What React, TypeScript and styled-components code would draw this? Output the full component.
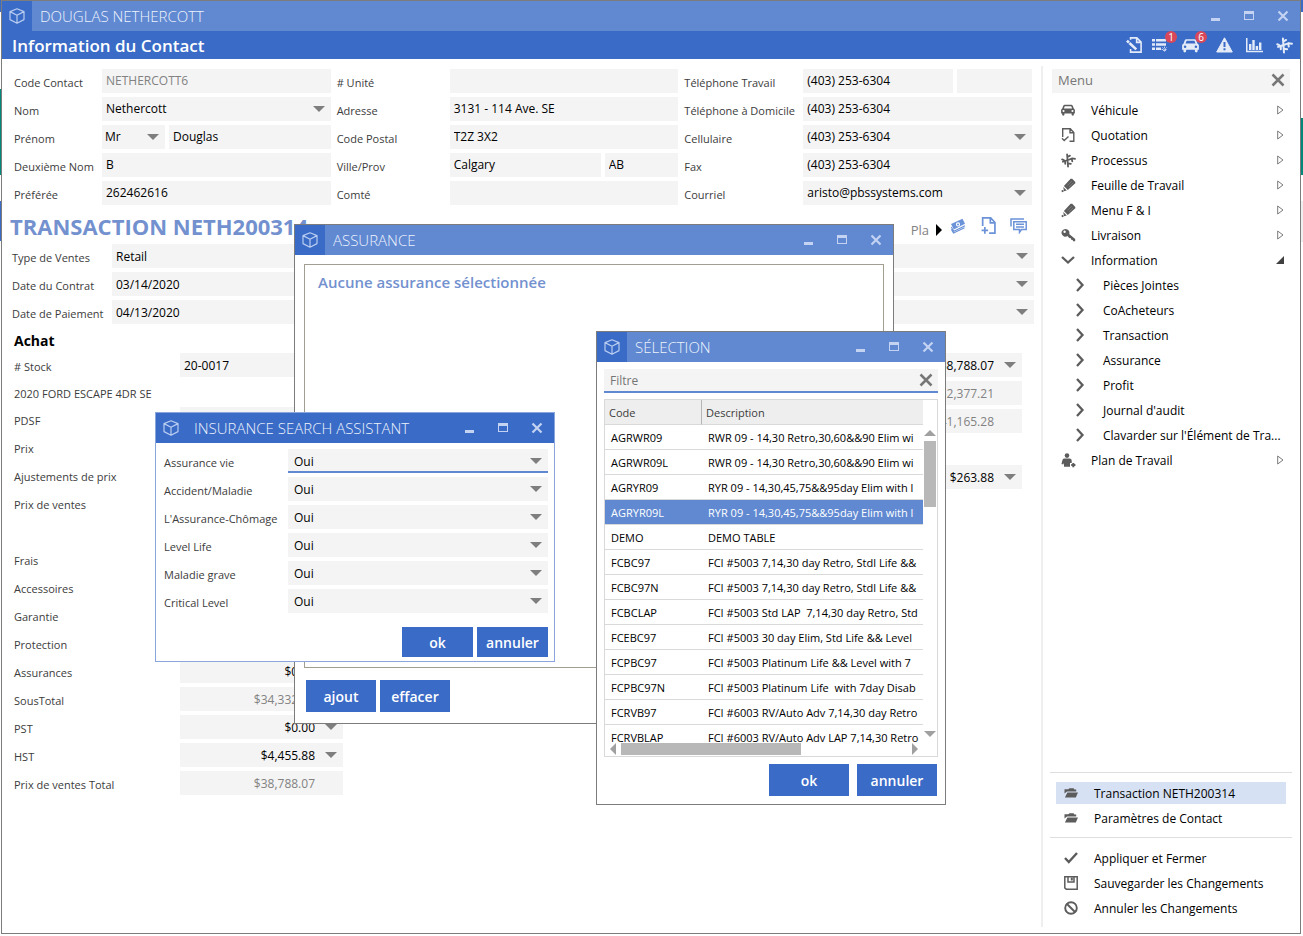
import React, { useId } from "react";
import styled, { createGlobalStyle, css } from "styled-components";

const color = {
  deep: "#3a6bc7",
  light: "#6089d2",
  soft: "#7391cf",
  field: "#f4f4f4",
  frame: "#7c7c7c",
  label: "#3c3c3c",
  muted: "#828282",
  icon: "#5c5c5c",
};

const Global = createGlobalStyle`
  *, *::before, *::after { box-sizing: border-box; }
  body { margin: 0; background: #fff; font-family: "Open Sans", "Noto Sans", sans-serif; font-size: 12px; color: #000; }
  button, input, select { font: inherit; color: inherit; margin: 0; }
  button { cursor: pointer; }
  ul { list-style: none; margin: 0; padding: 0; }
  h1, h2, h3, p { margin: 0; }
`;

const Desktop = styled.div`
  min-height: 100vh;
  position: relative;
  display: flex;
  padding: 0 2px 2px 1px;
  background-image:
    linear-gradient(#3a6bc7 0 12px, #fff 12px 89px, #00897b 89px 175px, #fff 175px 201px, #3a6bc7 201px 241px, #fff 241px),
    linear-gradient(#3a6bc7 0 12px, #fff 12px 118px, #00897b 118px 175px, #fff 175px 201px, #efefef 201px 242px, #fff 242px);
  background-size: 1px 100%, 2px 100%;
  background-position: left top, right top;
  background-repeat: no-repeat;
`;

const AppFrame = styled.div`
  flex: 1;
  min-width: 0;
  display: flex;
  flex-direction: column;
  background: #fff;
  border: 1px solid ${color.frame};
`;

/* ---------- window chrome ---------- */

const Bar = styled.header<{ $active?: boolean }>`
  height: 30px;
  flex: none;
  display: flex;
  align-items: center;
  padding-right: 1px;
  background: ${(p) => (p.$active ? color.deep : color.light)};
  color: #eef3fc;
`;

const BarIcon = styled.span`
  width: 30px;
  height: 30px;
  display: grid;
  place-items: center;
  background: ${color.deep};
  color: #b9cdf0;
`;

const BarTitle = styled.h2`
  flex: 1;
  padding-left: 8px;
  font-size: 15px;
  line-height: 20px;
  font-weight: 300;
  white-space: nowrap;
`;

const BarButton = styled.button`
  width: 33px;
  height: 30px;
  padding: 0;
  display: grid;
  place-items: center;
  border: 0;
  background: none;
  color: #c3d3f1;
`;

const Cube = () => (
  <svg width="16" height="16" viewBox="0 0 16 16" fill="none" stroke="currentColor" strokeWidth="1.2" strokeLinejoin="round">
    <path d="M8 .8 15 3.6v8L8 15.2 1 11.6v-8zM1 3.6l7 3.6 7-3.6M8 7.2v8" />
  </svg>
);

const TitleBar = ({ title, active }: { title: string; active?: boolean }) => (
  <Bar $active={active}>
    <BarIcon><Cube /></BarIcon>
    <BarTitle>{title}</BarTitle>
    <BarButton aria-label="Réduire">
      <svg width="12" height="12"><path d="M0 8h9v3H0z" fill="currentColor" /></svg>
    </BarButton>
    <BarButton aria-label="Agrandir">
      <svg width="12" height="12"><path d="M0 1h10v9H0zM1 4v5h8V4z" fill="currentColor" fillRule="evenodd" /></svg>
    </BarButton>
    <BarButton aria-label="Fermer">
      <svg width="12" height="12"><path d="M1.5 1.5l9 9M10.5 1.5l-9 9" stroke="currentColor" strokeWidth="2.2" /></svg>
    </BarButton>
  </Bar>
);

const SubHeader = styled.div`
  height: 28px;
  flex: none;
  display: flex;
  align-items: center;
  justify-content: space-between;
  padding: 0 1px 0 10px;
  background: ${color.deep};
  color: #e3ebf9;
`;

const PageTitle = styled.h1`
  padding-top: 1px;
  font-size: 17px;
  line-height: 24px;
  font-weight: 600;
  color: #fff;
`;

const ToolStrip = styled.div`
  display: flex;
`;

const Tool = styled.button<{ $badged?: boolean }>`
  position: relative;
  width: 30px;
  height: 18px;
  padding: 0 0 0 ${(p) => (p.$badged ? 3 : 0)}px;
  display: grid;
  align-items: center;
  justify-items: ${(p) => (p.$badged ? "start" : "center")};
  border: 0;
  background: none;
`;

const Badge = styled.span`
  position: absolute;
  top: -5px;
  right: 2px;
  width: 12px;
  height: 12px;
  border-radius: 6px;
  background: #d9485a;
  color: #fff;
  font-size: 10px;
  line-height: 12px;
  text-align: center;
`;

/* ---------- icons ---------- */

const CarIcon = ({ s = 16 }: { s?: number }) => (
  <svg width={s} height={s} viewBox="0 0 16 16" fill="currentColor">
    <path fillRule="evenodd" d="M4.2 2h7.6c.8 0 1.3.4 1.6 1.1L14.6 6.400c.8.4 1.300 1 1.300 1.900V12h-1.200v1.200c0 1-.6 1.300-1.300 1.300s-1.300-.4-1.300-1.300V12H3.900v1.200c0 1-.6 1.300-1.300 1.300s-1.300-.4-1.300-1.300V12H.1V8.300c0-.9.500-1.500 1.300-1.900l1.200-3.300C2.900 2.400 3.400 2 4.200 2zm.1 1.600L3.300 6.200h9.400l-1-2.600zM2.900 7.900a1.200 1.200 0 100 2.400 1.200 1.200 0 000-2.400zm10.200 0a1.200 1.200 0 100 2.400 1.200 1.200 0 000-2.400z" />
  </svg>
);
const PageIcon = ({ kind, s = 14 }: { kind: "check" | "plus" | "edit"; s?: number }) => (
  <svg width={s} height={s} viewBox="0 0 14 14" fill="none" stroke="currentColor" strokeWidth="1.400">
    {kind === "edit" && <path d="M4 2.500V.8h5.500l3.700 3.700v8.700H4v-2.700M9.300.8v3.900h3.900" />}
    {kind === "check" && <path d="M1.700 9V.8h7.600L12.800 4.500v8.700H8.500M9 .8v4h3.800M1 10.200 3.200 12.600 7.500 8.500" />}
    {kind === "plus" && <path d="M2.200 7.500V.8h6.600L12.300 4.500v8.700H7.500M8.500 .8v4h3.800M4 8.300v5.400M1.300 11h5.400" />}
    {kind === "edit" && <path d="M.8 3.200 2.600 4.800M3 5.200 9 10.800" strokeWidth="2.300" />}
  </svg>
);
const BranchIcon = ({ s = 15 }: { s?: number }) => (
  <svg width={s} height={s} viewBox="0 0 16 16" fill="none" stroke="currentColor" strokeWidth="1.900" strokeLinecap="round" strokeLinejoin="round">
    <path d="M1.200 6.800 3 7.600M2 9.300 7 7.500M6.500 1.500 7 7.500M9.500 2.800 6.800 4.300M7 7.500 7.500 14.500M7.400 11l3.100.6M7 7.700 12 5.800 15 6.300M11.500 6l.5 3M4.500 8.500v3" />
  </svg>
);
const PencilIcon = () => (
  <svg width="15" height="15" viewBox="0 0 15 15" fill="currentColor">
    <path d="M9.600.8h1.600L14.300 4v1.300L6.800 12 2.900 8zM2.200 8.900 5.800 12.500 3 13.300z" />
    <circle cx="1.600" cy="13.100" r="1.100" />
    <path d="M6.500 7.500 10.800 3.200M8 9l4.300-4.200" stroke="#8d8d8d" strokeWidth=".6" />
  </svg>
);
const KeyIcon = () => (
  <svg width="15" height="15" viewBox="0 0 15 15" fill="currentColor">
    <path fillRule="evenodd" d="M4.500.9a3.900 3.900 0 013.700 5.200l6 5v2.100h-2.100l-.4-1.300-1.500-.1-.3-1.500-1.700-.2-1.700-2A3.900 3.900 0 114.500.9zM3.600 2.500a1.200 1.200 0 100 2.400 1.200 1.200 0 000-2.400z" />
  </svg>
);
const Chevron = ({ down }: { down?: boolean }) => (
  <svg width="14" height="14" viewBox="0 0 14 14" fill="none" stroke="currentColor" strokeWidth="2.300">
    <path d={down ? "M1 4l6 5.500L13 4" : "M4 1l5.500 6L4 13"} />
  </svg>
);
const PersonIcon = () => (
  <svg width="15" height="15" viewBox="0 0 15 15" fill="currentColor">
    <circle cx="6" cy="2.600" r="2.300" />
    <path d="M3.500 5.500h5c1.500 0 2.200 1 2.200 2.200v2.200H9v3.800H3V10l-.8 1.500L.5 11 1.400 7.300C1.700 6 2.500 5.500 3.500 5.500z" />
    <path d="M12.300 10v4.200M10.200 12.100h4.200" stroke="currentColor" strokeWidth="2" />
  </svg>
);
const FolderIcon = () => (
  <svg width="14" height="10" viewBox="0 0 14 10" fill="currentColor">
    <path d="M.5 5.500V1.200h3.800L5.500.2h4l1 1.200h1.700v2.200H3zM3.400 4.500H14L11.800 9.600H.9z" />
  </svg>
);
const CheckIcon = () => (
  <svg width="14" height="14" viewBox="0 0 14 14" fill="none" stroke="currentColor" strokeWidth="2.400"><path d="M1 7l3.800 4L13 2" /></svg>
);
const SaveIcon = () => (
  <svg width="14" height="14" viewBox="0 0 14 14" fill="none" stroke="currentColor" strokeWidth="1.500">
    <path d="M.8.8h12.400v12.400H2.300L.8 12z" /><path d="M4 1v5h6V1" /><path d="M7.800 1.500v3" strokeWidth="2" />
  </svg>
);
const BanIcon = () => (
  <svg width="14" height="14" viewBox="0 0 14 14" fill="none" stroke="currentColor" strokeWidth="1.900"><circle cx="7" cy="7" r="5.800" /><path d="M3 3l8 8" /></svg>
);
const CrossIcon = () => (
  <svg width="14" height="14" viewBox="0 0 14 14" fill="none" stroke="#777" strokeWidth="2.500"><path d="M1.500 1.500l11 11M12.500 1.500l-11 11" /></svg>
);
const ListIcon = () => (
  <svg width="17" height="15" viewBox="0 0 17 15" fill="currentColor">
    <path d="M0 1h3v2.600H0zM4 1h10v2.600H4zM0 5.200h3v2.600H0zM4 5.200h10v2.600H4zM0 9.400h3V12H0zM4 9.400h5V12H4z" />
    <path d="M12.500 8.500v6M9.500 11.500h6M10.400 9.400l4.200 4.200M14.600 9.400l-4.200 4.200" stroke="currentColor" strokeWidth=".8" strokeDasharray="1.800 1.500" />
  </svg>
);
const WarningIcon = () => (
  <svg width="17" height="16" viewBox="0 0 17 16"><path d="M8.500.8 16.300 15H.7z" fill="currentColor" stroke="currentColor" strokeLinejoin="round" /><path d="M8.500 5v5M8.500 11.300v2" stroke="#3a6bc7" strokeWidth="2" /></svg>
);
const ChartIcon = () => (
  <svg width="17" height="15" viewBox="0 0 17 15" fill="currentColor"><path d="M0 0h1.500v12.800H17V14.200H0zM3 6h2.400v6H3zM6.300 2h2.400v10H6.300zM9.700 8h2.400v4H9.700zM13 4.500h2.400V12H13z" /></svg>
);
const CashIcon = () => (
  <svg width="16" height="16" viewBox="0 0 16 16" fill="currentColor">
    <path fillRule="evenodd" d="M1 6 12.500.8l2.500 5L3.800 11.500zM8 4.300a2.100 2.100 0 100 4.200 2.100 2.100 0 000-4.200z" />
    <circle cx="8" cy="6.400" r="1" />
    <path d="M1.300 9l2.500 4.200L15 7.700M1.300 11.200 3.500 15 14.500 9.700" fill="none" stroke="currentColor" strokeWidth="1.200" />
  </svg>
);
const ChatIcon = () => (
  <svg width="17" height="16" viewBox="0 0 17 16" fill="none" stroke="currentColor" strokeWidth="1.500">
    <path d="M1 8.500V1h13M3.800 3.800h12.400v7.700h-4.700L9.500 14.300v-2.800H3.800zM6 6.300h8M6 9h8" />
  </svg>
);

/* ---------- fields ---------- */

const box = css<{ $muted?: boolean; $end?: boolean; $focus?: boolean; $inset?: number }>`
  width: 100%;
  min-width: 0;
  height: 24px;
  border: 0;
  border-radius: 0;
  outline: 0;
  background: ${color.field};
  color: ${(p) => (p.$muted ? color.muted : "#000")};
  padding: 1px ${(p) => (p.$end ? 28 : 4)}px 0 ${(p) => p.$inset ?? 4}px;
  text-align: ${(p) => (p.$end ? "right" : "left")};
  text-align-last: ${(p) => (p.$end ? "right" : "left")};
  ${(p) => p.$focus && css`border-bottom: 2px solid ${color.light}; padding-top: 2px;`}
`;
const TextBox = styled.input`${box}`;
const Drop = styled.select`${box} appearance: none;`;

const DropShell = styled.div`
  min-width: 0;
  display: grid;
  align-items: center;
  & > * { grid-area: 1 / 1; }
`;
const Caret = styled.span`
  justify-self: end;
  margin-right: 6px;
  border: 6px solid transparent;
  border-top-color: #7e7e7e;
  border-bottom-width: 0;
  pointer-events: none;
`;

const Label = styled.label<{ $lead?: number }>`
  padding: 4px 0 0 ${(p) => p.$lead ?? 0}px;
  line-height: 20px;
  font-size: 11px;
  color: ${color.label};
  white-space: nowrap;
`;

type Cell = { value: string; drop?: boolean; muted?: boolean; end?: boolean; focus?: boolean; inset?: number };

const Control = ({ cell, id, name }: { cell: Cell; id?: string; name?: string }) => {
  const look = { $muted: cell.muted, $end: cell.end, $focus: cell.focus, $inset: cell.inset };
  return cell.drop ? (
    <DropShell>
      <Drop id={id} aria-label={name} {...look}><option>{cell.value}</option></Drop>
      <Caret />
    </DropShell>
  ) : (
    <TextBox id={id} aria-label={name} defaultValue={cell.value} {...look} />
  );
};

const Pair = styled.div<{ $cols: string }>`
  display: grid;
  grid-template-columns: ${(p) => p.$cols};
  gap: 4px;
`;

const Entry = ({ label, cells, cols, lead }: { label: string; cells: Cell[]; cols?: string; lead?: number }) => {
  const id = useId();
  return (
    <>
      <Label htmlFor={id} $lead={lead}>{label}</Label>
      <Pair $cols={cols ?? "minmax(0, 1fr)"}>
        {cells.map((c, i) => <Control key={i} cell={c} id={i ? undefined : id} name={i ? label : undefined} />)}
      </Pair>
    </>
  );
};

/* ---------- contact ---------- */

const Body = styled.div`
  flex: 1;
  display: flex;
`;
const Main = styled.main`
  flex: 1;
  min-width: 0;
  padding-top: 10px;
`;
const ContactForm = styled.form`
  display: grid;
  grid-template-columns: 88px minmax(0, 1fr) 119px minmax(0, 1fr) 125px minmax(0, 1fr);
  row-gap: 4px;
  padding: 0 9px 0 12px;
  & input, & select { padding-top: 0; padding-bottom: 1px; }
`;
const phone = "(403) 253-6304";

const Contact = () => (
  <ContactForm>
    <Entry label="Code Contact" cells={[{ value: "NETHERCOTT6", muted: true }]} />
    <Entry label="# Unité" lead={6} cells={[{ value: "" }]} />
    <Entry label="Téléphone Travail" lead={6} cols="150px minmax(0, 1fr)" cells={[{ value: phone }, { value: "" }]} />
    <Entry label="Nom" cells={[{ value: "Nethercott", drop: true }]} />
    <Entry label="Adresse" lead={6} cells={[{ value: "3131 - 114 Ave. SE" }]} />
    <Entry label="Téléphone à Domicile" lead={6} cells={[{ value: phone }]} />
    <Entry label="Prénom" cols="63px minmax(0, 1fr)" cells={[{ value: "Mr", drop: true, inset: 3 }, { value: "Douglas" }]} />
    <Entry label="Code Postal" lead={6} cells={[{ value: "T2Z 3X2" }]} />
    <Entry label="Cellulaire" lead={6} cells={[{ value: phone, drop: true }]} />
    <Entry label="Deuxième Nom" cells={[{ value: "B" }]} />
    <Entry label="Ville/Prov" lead={6} cols="151px minmax(0, 1fr)" cells={[{ value: "Calgary" }, { value: "AB" }]} />
    <Entry label="Fax" lead={6} cells={[{ value: phone }]} />
    <Entry label="Préférée" cells={[{ value: "262462616" }]} />
    <Entry label="Comté" lead={6} cells={[{ value: "" }]} />
    <Entry label="Courriel" lead={6} cells={[{ value: "aristo@pbssystems.com", drop: true }]} />
  </ContactForm>
);

/* ---------- transaction ---------- */

const DealHead = styled.div`
  height: 39px;
  display: flex;
  align-items: center;
  justify-content: space-between;
  padding: 2px 8px 0 8px;
`;
const DealTitle = styled.h2`
  font-size: 22px;
  line-height: 30px;
  font-weight: 700;
  color: ${color.soft};
  white-space: nowrap;
`;
const DealTools = styled.div`
  display: flex;
  align-items: center;
  color: #6c93d8;
`;
const MoreTab = styled.button`
  display: flex;
  align-items: center;
  gap: 7px;
  padding: 8px 1px 0 0;
  border: 0;
  background: none;
  color: ${color.muted};
  font-size: 13px;
  line-height: 18px;
`;
const Play = styled.i`
  border: 6px solid transparent;
  border-left-color: #000;
  border-right-width: 0;
`;
const DealForm = styled.form`
  display: grid;
  grid-template-columns: 100px minmax(0, 1fr);
  row-gap: 4px;
  padding: 0 7px 0 10px;
`;
const Sheet = styled.section`
  display: flex;
  justify-content: space-between;
  padding: 0 19px 0 12px;
`;
const SheetTitle = styled.h3`
  height: 29px;
  padding: 6px 12px 0;
  font-size: 14px;
  line-height: 22px;
  font-weight: 700;
`;
const Ledger = styled.div<{ $labels?: boolean }>`
  display: grid;
  grid-template-columns: ${(p) => (p.$labels ? "166px 163px" : "163px")};
  grid-auto-rows: min-content;
  gap: 4px 0;
`;
const Vehicle = styled.p`
  grid-column: 1 / -1;
  height: 22px;
  padding-top: 2px;
  line-height: 22px;
  font-size: 11px;
  color: ${color.label};
`;
const Blank = styled.div`
  grid-column: 1 / -1;
  height: 24px;
`;

const BlueTool = styled(Tool)`color: #6c93d8;`;

const money = (value: string, drop = false, muted = false): Cell[] => [{ value, drop, muted, end: true }];

const Deal = () => (
  <>
    <DealHead>
      <DealTitle>TRANSACTION NETH200314</DealTitle>
      <DealTools>
        <MoreTab>Pla<Play /></MoreTab>
        <BlueTool aria-label="Paiement"><CashIcon /></BlueTool>
        <BlueTool aria-label="Ajouter un document"><PageIcon kind="plus" s={17} /></BlueTool>
        <BlueTool aria-label="Commentaires"><ChatIcon /></BlueTool>
      </DealTools>
    </DealHead>
    <DealForm>
      {[["Type de Ventes", "Retail"], ["Date du Contrat", "03/14/2020"], ["Date de Paiement", "04/13/2020"]].map(([l, v]) => (
        <Entry key={l} label={l} cols="minmax(0, 1fr) minmax(0, 1fr)" cells={[{ value: v }, { value: "", drop: true }]} />
      ))}
    </DealForm>
    <SheetTitle>Achat</SheetTitle>
    <Sheet>
      <Ledger $labels>
        <Entry label="# Stock" cells={[{ value: "20-0017" }]} />
        <Vehicle>2020 FORD ESCAPE 4DR SE</Vehicle>
        {["PDSF", "Prix", "Ajustements de prix", "Prix de ventes"].map((l) => <Entry key={l} label={l} cells={money("")} />)}
        <Blank />
        {["Frais", "Accessoires", "Garantie", "Protection"].map((l) => <Entry key={l} label={l} cells={money("")} />)}
        <Entry label="Assurances" cells={money("$0.00", true)} />
        <Entry label="SousTotal" cells={money("$34,332.19", false, true)} />
        <Entry label="PST" cells={money("$0.00", true)} />
        <Entry label="HST" cells={money("$4,455.88", true)} />
        <Entry label="Prix de ventes Total" cells={money("$38,788.07", false, true)} />
      </Ledger>
      <Ledger>
        <Control name="Total" cell={money("$38,788.07", true)[0]} />
        <Control name="Intérêts" cell={money("$2,377.21", false, true)[0]} />
        <Control name="Solde" cell={money("$41,165.28", false, true)[0]} />
        <Blank />
        <Control name="Versement" cell={money("$263.88", true)[0]} />
      </Ledger>
    </Sheet>
  </>
);

/* ---------- side menu ---------- */

const Side = styled.aside`
  width: 259px;
  flex: none;
  margin: 7px 0 6px;
  padding: 3px 8px 0 7px;
  display: flex;
  flex-direction: column;
  border-left: 2px solid #efefef;
`;
const SideHead = styled.div`
  height: 24px;
  margin: 0 2px 5px 2px;
  display: flex;
  align-items: center;
  justify-content: space-between;
  padding: 0 5px 2px 6px;
  background: ${color.field};
  color: #777;
  font-size: 13px;
`;
const PlainButton = styled.button`
  display: grid;
  place-items: center;
  padding: 0;
  border: 0;
  background: none;
`;
const MenuItem = styled.li`
  height: 25px;
`;
const MenuButton = styled.button<{ $sub?: boolean }>`
  width: 100%;
  height: 25px;
  display: grid;
  grid-template-columns: 16px minmax(0, 1fr) auto;
  column-gap: 15px;
  align-items: center;
  justify-items: start;
  padding: 0 8px 1px ${(p) => (p.$sub ? 22 : 10)}px;
  ${(p) => p.$sub && css`padding-right: 0; grid-template-columns: 16px minmax(0, 1fr);`}
  border: 0;
  background: none;
  text-align: left;
  white-space: nowrap;
  & > svg:first-child { justify-self: center; color: ${color.icon}; }
`;
const Hollow = () => <svg width="7" height="10" viewBox="0 0 7 10" fill="none" stroke="#7a7a7a"><path d="M.7 1v8L6 5z" /></svg>;
const Solid = () => <svg width="8" height="8" viewBox="0 0 8 8" fill="#404040"><path d="M8 0v8H0z" /></svg>;

const menu: { text: string; icon: React.ReactNode; sub?: boolean; open?: boolean }[] = [
  { text: "Véhicule", icon: <CarIcon s={14} /> },
  { text: "Quotation", icon: <PageIcon kind="check" /> },
  { text: "Processus", icon: <BranchIcon /> },
  { text: "Feuille de Travail", icon: <PencilIcon /> },
  { text: "Menu F & I", icon: <PencilIcon /> },
  { text: "Livraison", icon: <KeyIcon /> },
  { text: "Information", icon: <Chevron down />, open: true },
  ...["Pièces Jointes", "CoAcheteurs", "Transaction", "Assurance", "Profit", "Journal d'audit", "Clavarder sur l'Élément de Tra..."].map((text) => ({
    text, icon: <Chevron />, sub: true,
  })),
  { text: "Plan de Travail", icon: <PersonIcon /> },
];

const Footer = styled.div`
  margin-top: auto;
`;
const FooterGroup = styled.ul`
  border-top: 1px solid #dedede;
  padding: 9px 6px 5px;
`;
const FooterButton = styled.button<{ $on?: boolean }>`
  width: 100%;
  height: 22px;
  margin-bottom: 3px;
  display: grid;
  grid-template-columns: 16px 1fr;
  column-gap: 15px;
  align-items: center;
  justify-items: start;
  padding: 0 7px;
  border: 0;
  background: ${(p) => (p.$on ? "#d6e1f3" : "none")};
  white-space: nowrap;
  & > svg { justify-self: center; color: ${color.icon}; }
`;

const SideMenu = () => (
  <Side>
    <SideHead>Menu<PlainButton aria-label="Fermer le menu"><CrossIcon /></PlainButton></SideHead>
    <ul>
      {menu.map((m) => (
        <MenuItem key={m.text}>
          <MenuButton $sub={m.sub}>
            {m.icon}
            <span>{m.text}</span>
            {!m.sub && (m.open ? <Solid /> : <Hollow />)}
          </MenuButton>
        </MenuItem>
      ))}
    </ul>
    <Footer>
      <FooterGroup>
        <li><FooterButton $on><FolderIcon />Transaction NETH200314</FooterButton></li>
        <li><FooterButton><FolderIcon />Paramètres de Contact</FooterButton></li>
      </FooterGroup>
      <FooterGroup>
        <li><FooterButton><CheckIcon />Appliquer et Fermer</FooterButton></li>
        <li><FooterButton><SaveIcon />Sauvegarder les Changements</FooterButton></li>
        <li><FooterButton><BanIcon />Annuler les Changements</FooterButton></li>
      </FooterGroup>
    </Footer>
  </Side>
);

/* ---------- floating windows ---------- */

const Floating = styled.section<{ $x: number; $y: number; $w: number; $h: number; $active?: boolean }>`
  position: absolute;
  left: ${(p) => p.$x}px;
  top: ${(p) => p.$y}px;
  width: ${(p) => p.$w}px;
  height: ${(p) => p.$h}px;
  display: flex;
  flex-direction: column;
  background: #fff;
  border: 1px solid ${(p) => (p.$active ? "#8aa6dc" : color.frame)};
`;
const Action = styled.button<{ $w: number; $h?: number }>`
  width: ${(p) => p.$w}px;
  height: ${(p) => p.$h ?? 32}px;
  padding: 1px 0 0;
  border: 0;
  background: ${color.deep};
  color: #fff;
  font-size: 14px;
  font-weight: 600;
`;
const Actions = styled.div<{ $gap?: number; $start?: boolean }>`
  display: flex;
  gap: ${(p) => p.$gap ?? 4}px;
  justify-content: ${(p) => (p.$start ? "flex-start" : "flex-end")};
`;

const AssuranceBody = styled.div`
  flex: 1;
  display: flex;
  flex-direction: column;
  gap: 12px;
  padding: 9px 9px 11px;
`;
const Panel = styled.div`
  flex: 1;
  border: 1px solid #a39e92;
  padding: 6px 13px;
`;
const PanelTitle = styled.h3`
  font-size: 15px;
  line-height: 22px;
  font-weight: 600;
  color: ${color.soft};
`;
const PanelActions = styled(Actions)`padding-left: 2px;`;

const AssistantForm = styled.form`
  display: grid;
  grid-template-columns: 124px minmax(0, 1fr);
  row-gap: 4px;
  padding: 6px 6px 0 8px;
`;
const AssistantActions = styled(Actions)`padding: 14px 6px 0;`;

const SelectionBody = styled.div`
  flex: 1;
  min-height: 0;
  display: flex;
  flex-direction: column;
  padding: 7px 7px 8px;
`;
const SelectionActions = styled(Actions)`padding-right: 1px;`;
const Filter = styled.label`
  height: 24px;
  margin-bottom: 6px;
  display: flex;
  align-items: center;
  padding-right: 5px;
  background: ${color.field};
  border-bottom: 2px solid ${color.light};
`;
const FilterInput = styled.input`
  flex: 1;
  min-width: 0;
  border: 0;
  outline: 0;
  padding: 0 6px;
  background: none;
  &::placeholder { color: #757575; opacity: 1; }
`;
const GridFrame = styled.div`
  flex: 1;
  min-height: 0;
  margin-bottom: 7px;
  display: grid;
  grid-template-columns: minmax(0, 1fr) 14px;
  grid-template-rows: minmax(0, 1fr) 13px;
  border: 1px solid #d9d9d9;
`;
const Viewport = styled.div`overflow: hidden;`;
const Table = styled.table`
  width: 560px;
  table-layout: fixed;
  border-collapse: separate;
  border-spacing: 0;
  font-size: 11px;
  line-height: 18px;
  white-space: pre;
`;
const Th = styled.th<{ $code?: boolean }>`
  width: ${(p) => (p.$code ? "97px" : "auto")};
  height: 25px;
  padding: 2px 4px 0;
  text-align: left;
  font-weight: 400;
  color: ${color.label};
  background: #eee;
  border-bottom: 1px solid #d9d9d9;
  ${(p) => p.$code && css`border-right: 1px solid #b5b5b5;`}
`;
const Td = styled.td`
  height: 25px;
  padding: 2px 6px 0;
  border-bottom: 1px solid #d9d9d9;
`;
const Tr = styled.tr<{ $on?: boolean }>`
  ${(p) => p.$on && css`background: ${color.light}; color: #fff;`}
`;
const VTrack = styled.div`
  display: flex;
  flex-direction: column;
  align-items: center;
  padding: 30px 0 6px;
`;
const HTrack = styled.div`
  display: flex;
  align-items: flex-start;
  padding: 0 5px;
`;
const Arrow = styled.i<{ $to: "up" | "down" | "left" | "right" }>`
  border: 6px solid transparent;
  ${(p) => p.$to === "up" && "border-bottom-color: #a0a0a0; border-top-width: 0;"}
  ${(p) => p.$to === "down" && "border-top-color: #a0a0a0; border-bottom-width: 0; margin-top: auto;"}
  ${(p) => p.$to === "left" && "border-right-color: #a0a0a0; border-left-width: 0;"}
  ${(p) => p.$to === "right" && "border-left-color: #a0a0a0; border-right-width: 0; margin-left: auto;"}
`;
const VThumb = styled.div`
  width: 12px;
  height: 66px;
  margin-top: 5px;
  background: #b8b8b8;
`;
const HThumb = styled.div`
  width: 180px;
  height: 12px;
  margin-left: 5px;
  background: #b8b8b8;
`;

const rows: [string, string][] = [
  ["AGRWR09", "RWR 09 - 14,30 Retro,30,60&&90 Elim wi"],
  ["AGRWR09L", "RWR 09 - 14,30 Retro,30,60&&90 Elim wi"],
  ["AGRYR09", "RYR 09 - 14,30,45,75&&95day Elim with l"],
  ["AGRYR09L", "RYR 09 - 14,30,45,75&&95day Elim with l"],
  ["DEMO", "DEMO TABLE"],
  ["FCBC97", "FCI #5003 7,14,30 day Retro, Stdl Life &&"],
  ["FCBC97N", "FCI #5003 7,14,30 day Retro, Stdl Life &&"],
  ["FCBCLAP", "FCI #5003 Std LAP  7,14,30 day Retro, Std"],
  ["FCEBC97", "FCI #5003 30 day Elim, Std Life && Level"],
  ["FCPBC97", "FCI #5003 Platinum Life && Level with 7"],
  ["FCPBC97N", "FCI #5003 Platinum Life  with 7day Disab"],
  ["FCRVB97", "FCI #6003 RV/Auto Adv 7,14,30 day Retro"],
  ["FCRVBLAP", "FCI #6003 RV/Auto Adv LAP 7,14,30 Retro"],
];

const AssuranceWindow = () => (
  <Floating $x={294} $y={224} $w={600} $h={500}>
    <TitleBar title="ASSURANCE" />
    <AssuranceBody>
      <Panel><PanelTitle>Aucune assurance sélectionnée</PanelTitle></Panel>
      <PanelActions $start>
        <Action $w={70}>ajout</Action>
        <Action $w={70}>effacer</Action>
      </PanelActions>
    </AssuranceBody>
  </Floating>
);

const AssistantWindow = () => (
  <Floating $x={155} $y={412} $w={400} $h={250} $active>
    <TitleBar title="INSURANCE SEARCH ASSISTANT" active />
    <AssistantForm>
      {["Assurance vie", "Accident/Maladie", "L'Assurance-Chômage", "Level Life", "Maladie grave", "Critical Level"].map((l, i) => (
        <Entry key={l} label={l} cells={[{ value: "Oui", drop: true, focus: i === 0, inset: 6 }]} />
      ))}
    </AssistantForm>
    <AssistantActions>
      <Action $w={71} $h={30}>ok</Action>
      <Action $w={71} $h={30}>annuler</Action>
    </AssistantActions>
  </Floating>
);

const SelectionWindow = () => (
  <Floating $x={596} $y={331} $w={350} $h={474}>
    <TitleBar title="SÉLECTION" />
    <SelectionBody>
      <Filter>
        <FilterInput placeholder="Filtre" aria-label="Filtre" />
        <PlainButton aria-label="Effacer le filtre"><CrossIcon /></PlainButton>
      </Filter>
      <GridFrame>
        <Viewport>
          <Table>
            <thead><tr><Th $code>Code</Th><Th>Description</Th></tr></thead>
            <tbody>
              {rows.map(([code, text], i) => (
                <Tr key={code} $on={i === 3}><Td>{code}</Td><Td>{text}</Td></Tr>
              ))}
            </tbody>
          </Table>
        </Viewport>
        <VTrack><Arrow $to="up" /><VThumb /><Arrow $to="down" /></VTrack>
        <HTrack><Arrow $to="left" /><HThumb /><Arrow $to="right" /></HTrack>
      </GridFrame>
      <SelectionActions $gap={8}>
        <Action $w={80}>ok</Action>
        <Action $w={80}>annuler</Action>
      </SelectionActions>
    </SelectionBody>
  </Floating>
);

export default function App() {
  return (
    <>
      <Global />
      <Desktop>
        <AppFrame>
          <TitleBar title="DOUGLAS NETHERCOTT" />
          <SubHeader>
            <PageTitle>Information du Contact</PageTitle>
            <ToolStrip>
              <Tool aria-label="Modifier"><PageIcon kind="edit" s={16} /></Tool>
              <Tool aria-label="Tâches" $badged><ListIcon /><Badge>1</Badge></Tool>
              <Tool aria-label="Véhicules" $badged><CarIcon s={17} /><Badge>6</Badge></Tool>
              <Tool aria-label="Alertes"><WarningIcon /></Tool>
              <Tool aria-label="Rapports"><ChartIcon /></Tool>
              <Tool aria-label="Processus"><BranchIcon s={17} /></Tool>
            </ToolStrip>
          </SubHeader>
          <Body>
            <Main>
              <Contact />
              <Deal />
            </Main>
            <SideMenu />
          </Body>
        </AppFrame>
        <AssuranceWindow />
        <AssistantWindow />
        <SelectionWindow />
      </Desktop>
    </>
  );
}
